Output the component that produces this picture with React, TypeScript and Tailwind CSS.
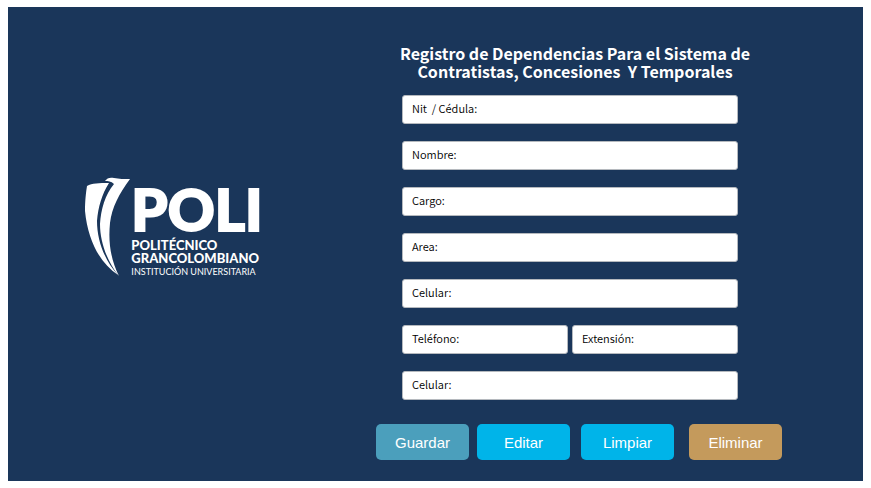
import type { ReactNode } from "react";

function Field({ id, label }: { id: string; label: string }) {
  return (
    <div className="flex h-[29px] min-w-0 flex-1 items-center rounded-[3px] border border-[#b5b9be] bg-white px-[9px] pb-[3px]">
      <label htmlFor={id} className="shrink-0 whitespace-pre text-[11px] font-[350] leading-4 text-black">
        {label}
      </label>
      <input id={id} name={id} type="text" className="ml-2 h-full w-full min-w-0 bg-transparent text-[11px] outline-none" />
    </div>
  );
}

function ActionButton({ className, children }: { className: string; children: ReactNode }) {
  return (
    <button
      type="button"
      className={`h-9 w-[93px] rounded-[5px] pt-[2px] font-['Liberation_Sans',Arial,sans-serif] text-[15px] text-white ${className}`}
    >
      {children}
    </button>
  );
}

function Logo() {
  return (
    <div className="flex font-['Lato',sans-serif] text-white">
      <svg width="46" height="100" viewBox="0 0 46 100" fill="currentColor" aria-hidden="true">
        <path d="M2 9 C7 6 14 6 24 6 C17 17 13 30 12 44 C12 64 20 84 33 98 C15 86 3 64 0 34 C0 24 1 15 2 9 Z" />
        <path d="M20 4 C22 1 25 0 29 1 C34 2 39 2 45 2 C34 17 27 30 25 46 C23 66 26 83 34 99 C23 86 15 66 15 47 C16 32 20 18 29 7 C26 4 23 4 20 4 Z" />
      </svg>
      <div className="flex flex-col pt-2">
        <span className="text-[58px] font-black leading-[48px] [-webkit-text-stroke:2px_white]">POLI</span>
        <span className="mt-[6px] text-[13px] font-black leading-[13px]">POLITÉCNICO</span>
        <span className="text-[13px] font-black leading-[13px]">GRANCOLOMBIANO</span>
        <span className="text-[9px] leading-[13px]">INSTITUCIÓN UNIVERSITARIA</span>
      </div>
    </div>
  );
}

export default function App() {
  return (
    <div className="min-h-screen bg-white px-2 py-[7px] font-['Noto_Sans_CJK_SC',sans-serif]">
      <main className="grid bg-[#1a365a] md:grid-cols-[minmax(0,1fr)_406px] md:pr-[81px]">
        <div className="flex items-center justify-center pb-[34px] pr-9">
          <Logo />
        </div>
        <form className="pb-[21px] pt-[37px]">
          <h1 className="mr-2 whitespace-pre-wrap text-center text-base font-bold leading-[18px] text-white">
            Registro de Dependencias Para el Sistema de
            <br />
            {"Contratistas, Concesiones  Y Temporales"}
          </h1>
          <div className="ml-[26px] mr-11 mt-[15px] flex flex-col gap-[17px]">
            <div className="flex"><Field id="nit" label="Nit  / Cédula:" /></div>
            <div className="flex"><Field id="nombre" label="Nombre:" /></div>
            <div className="flex"><Field id="cargo" label="Cargo:" /></div>
            <div className="flex"><Field id="area" label="Area:" /></div>
            <div className="flex"><Field id="celular" label="Celular:" /></div>
            <div className="flex gap-1">
              <Field id="telefono" label="Teléfono:" />
              <Field id="extension" label="Extensión:" />
            </div>
            <div className="flex"><Field id="celular-alterno" label="Celular:" /></div>
          </div>
          <div className="mt-6 flex">
            <ActionButton className="bg-[#4b9fbc]">Guardar</ActionButton>
            <ActionButton className="ml-2 bg-[#00b4e9]">Editar</ActionButton>
            <ActionButton className="ml-[11px] bg-[#00b4e9]">Limpiar</ActionButton>
            <ActionButton className="ml-[15px] bg-[#c49a5c]">Eliminar</ActionButton>
          </div>
        </form>
      </main>
    </div>
  );
}
